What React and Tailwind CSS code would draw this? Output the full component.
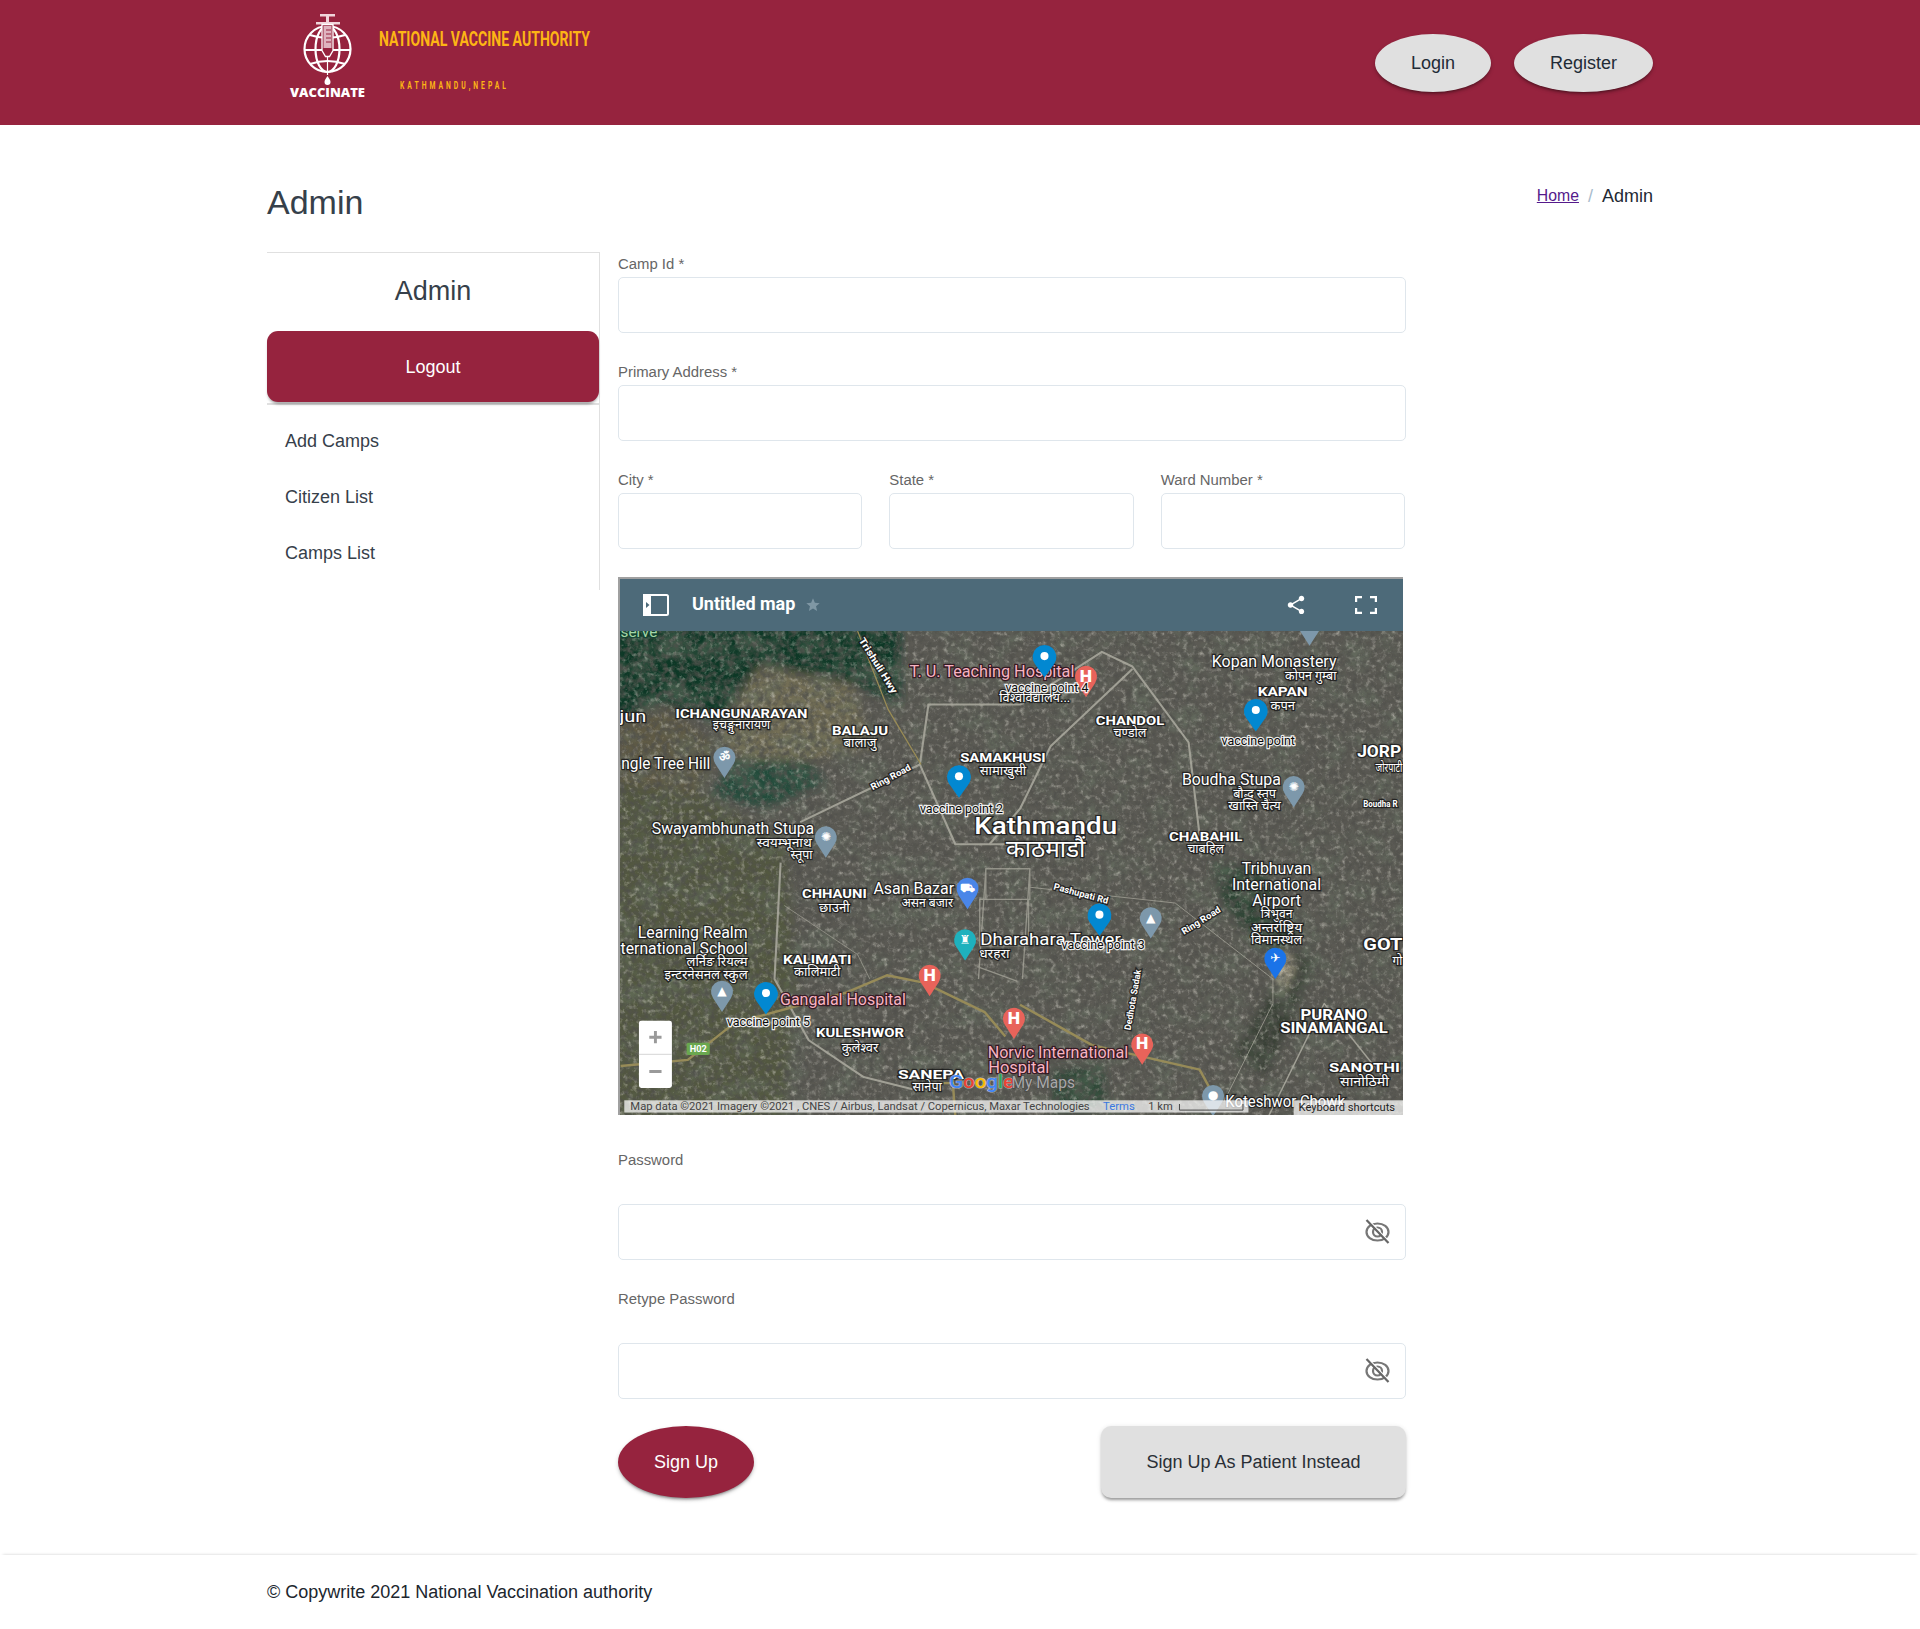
import React from "react";
import { MdShare, MdStar } from "react-icons/md";

const font = "font-['Liberation_Sans',Arial,sans-serif]";

// [text, cx, cy, width, size, kind, rotate]
const mapLabels = [
  ["serve", 521, 517, 30, 12, "green"],
  ["T. U. Teaching Hospital", 810, 549, 135, 13.5, "pink"],
  ["विश्वविद्यालय...", 845, 571, 58, 10, "white"],
  ["Kopan Monastery", 1041, 541, 102, 13.5, "white"],
  ["कोपन गुम्बा", 1071, 553, 42, 10, "white"],
  ["KAPAN", 1048, 565, 41, 11, "bold"],
  ["कपन", 1048, 577, 20, 10, "white"],
  ["ICHANGUNARAYAN", 605, 583, 108, 11, "bold"],
  ["इचङ्गुनारायण", 605, 593, 47, 10, "white"],
  ["jun", 516, 585, 22, 14, "white"],
  ["BALAJU", 702, 597, 46, 11, "bold"],
  ["बालाजु", 702, 607, 27, 10, "white"],
  ["CHANDOL", 923, 589, 56, 11, "bold"],
  ["चण्डोल", 923, 599, 27, 10, "white"],
  ["SAMAKHUSI", 819, 619, 70, 11, "bold"],
  ["सामाखुसी", 819, 630, 38, 10, "white"],
  ["ngle Tree Hill", 543, 624, 73, 13.5, "white"],
  ["JORP", 1127, 614, 36, 13, "bold"],
  ["जोरपाटी", 1135, 628, 22, 10, "white"],
  ["Boudha Stupa", 1006, 637, 81, 13.5, "white"],
  ["बौद्ध स्तूप", 1025, 649, 35, 10, "white"],
  ["खास्ति चैत्य", 1025, 659, 43, 10, "white"],
  ["Boudha R", 1128, 657, 28, 7, "bold"],
  ["Kathmandu", 854, 675, 117, 20, "big"],
  ["काठमाडौं", 854, 694, 65, 19, "white"],
  ["Swayambhunath Stupa", 598, 677, 133, 13.5, "white"],
  ["स्वयम्भूनाथ", 640, 689, 45, 10, "white"],
  ["स्तूपा", 654, 699, 18, 10, "white"],
  ["CHABAHIL", 985, 684, 60, 11, "bold"],
  ["चाबहिल", 985, 694, 30, 10, "white"],
  ["Tribhuvan", 1043, 710, 57, 13.5, "white"],
  ["International", 1043, 723, 73, 13.5, "white"],
  ["Airport", 1043, 736, 40, 13.5, "white"],
  ["त्रिभुवन", 1043, 747, 26, 10, "white"],
  ["अन्तर्राष्ट्रिय", 1043, 758, 42, 10, "white"],
  ["विमानस्थल", 1043, 768, 42, 10, "white"],
  ["CHHAUNI", 681, 730, 53, 11, "bold"],
  ["छाउनी", 681, 742, 25, 10, "white"],
  ["Asan Bazar", 746, 726, 66, 13.5, "white"],
  ["असन बजार", 757, 738, 42, 10, "white"],
  ["Learning Realm", 565, 762, 90, 13.5, "white"],
  ["ternational School", 558, 775, 104, 13.5, "white"],
  ["लर्निङ रियल्म", 585, 786, 50, 10, "white"],
  ["इन्टरनेसनल स्कुल", 576, 797, 68, 10, "white"],
  ["KALIMATI", 667, 784, 56, 11, "bold"],
  ["कालिमाटी", 667, 794, 38, 10, "white"],
  ["Dharahara Tower", 858, 768, 115, 13.5, "white"],
  ["धरहरा", 812, 780, 25, 10, "white"],
  ["Pashupati Rd", 883, 730, 46, 7.5, "bold", 15],
  ["Ring Road", 981, 752, 36, 7.5, "bold", -32],
  ["Ring Road", 727, 635, 36, 7.5, "bold", -28],
  ["Trishuli Hwy", 717, 544, 52, 8, "bold", 58],
  ["Dedhota Sadak", 925, 817, 50, 7.5, "bold", -80],
  ["GOT", 1130, 772, 32, 13, "bold"],
  ["गो", 1142, 785, 8, 10, "white"],
  ["PURANO", 1090, 829, 55, 11.5, "bold"],
  ["SINAMANGAL", 1090, 840, 88, 11.5, "bold"],
  ["Gangalal Hospital", 688, 817, 103, 13.5, "pink"],
  ["KULESHWOR", 702, 844, 72, 11, "bold"],
  ["कुलेश्वर", 702, 856, 30, 10, "white"],
  ["Norvic International", 864, 860, 115, 13.5, "pink"],
  ["Hospital", 832, 872, 50, 13.5, "pink"],
  ["SANEPA", 760, 878, 54, 11, "bold"],
  ["सानेपा", 757, 888, 24, 10, "white"],
  ["SANOTHI", 1115, 872, 58, 11, "bold"],
  ["सानोठिमी", 1115, 884, 40, 10, "white"],
  ["Koteshwor Chowk", 1050, 900, 98, 13.5, "white"],
];

const pinLabels = [
  ["vaccine point 4", 855, 562, 68, 10.5, "pin"],
  ["vaccine point", 1028, 605, 60, 10.5, "pin"],
  ["vaccine point 2", 785, 661, 68, 10.5, "pin"],
  ["vaccine point 3", 901, 772, 68, 10.5, "pin"],
  ["vaccine point 5", 627, 835, 68, 10.5, "pin"],
];

const bluePins = [
  [853, 554],
  [1026, 598],
  [783, 652],
  [898, 765],
  [625, 829],
];

const pinPath = (x, tip, w, h) => {
  const r = w / 2;
  const cy = tip - h + r;
  return `M${x} ${tip}L${x - r * 0.82} ${cy + r * 0.62}A${r} ${r} 0 1 1 ${x + r * 0.82} ${cy + r * 0.62}Z`;
};

// [x, tip, colour, glyph]
const poiPins = [
  [591, 636, "#7d98ab", "ॐ"],
  [674, 701, "#7d98ab", "✺"],
  [1057, 660, "#7d98ab", "✺"],
  [1070, 528, "#7d98ab", "✺"],
  [589, 827, "#7d98ab", "▲"],
  [940, 767, "#7d98ab", "▲"],
  [991, 912, "#7d98ab", "●"],
  [887, 570, "#e8635a", "H"],
  [759, 814, "#e8635a", "H"],
  [828, 849, "#e8635a", "H"],
  [933, 870, "#e8635a", "H"],
  [790, 743, "#4a86e8", "⛟"],
  [788, 785, "#1eb1bd", "♜"],
  [1042, 800, "#1a73e8", "✈"],
];

const labelStyle = {
  white: { fill: "#fff", stroke: "#1c1c1c", weight: 400, halo: 2.2, fade: 0.85 },
  bold: { fill: "#fff", stroke: "#1c1c1c", weight: 700, halo: 2.2, fade: 0.85 },
  big: { fill: "#fff", stroke: "#1c1c1c", weight: 500, halo: 2.2, fade: 0.85 },
  green: { fill: "#a5d6a7", stroke: "#143", weight: 400, halo: 2.2, fade: 0.85 },
  pink: { fill: "#f7b4c2", stroke: "#2f0f1b", weight: 400, halo: 2.2, fade: 0.85 },
  pin: { fill: "#0b0b0b", stroke: "#fff", weight: 400, halo: 2, fade: 0.9 },
};

const MapLabel = ({ text, x, y, w, size, kind, rotate }) => {
  const s = labelStyle[kind];
  return (
    <text
      x={x}
      y={y}
      textAnchor="middle"
      dominantBaseline="central"
      fontFamily="Roboto, 'Noto Sans', 'Noto Sans CJK SC', sans-serif"
      fontSize={size}
      fontWeight={s.weight}
      fill={s.fill}
      stroke={s.stroke}
      strokeWidth={s.halo}
      paintOrder="stroke"
      strokeOpacity={s.fade}
      textLength={w}
      lengthAdjust="spacingAndGlyphs"
      transform={rotate ? `rotate(${rotate} ${x} ${y})` : undefined}
    >
      {text}
    </text>
  );
};

const SatelliteMap = () => (
  <svg viewBox="505.5 516 641 395" className="block w-full h-[484px]" preserveAspectRatio="none">
    <defs>
      <filter id="speckDark" x="0" y="0" width="100%" height="100%">
        <feTurbulence type="fractalNoise" baseFrequency="0.2" numOctaves="4" seed="7" />
        <feColorMatrix values="0 0 0 0 0.08  0 0 0 0 0.08  0 0 0 0 0.07  2.6 0 0 0 -0.95" />
        <feGaussianBlur stdDeviation="0.6" />
      </filter>
      <filter id="speckLight" x="0" y="0" width="100%" height="100%">
        <feTurbulence type="fractalNoise" baseFrequency="0.24" numOctaves="4" seed="23" />
        <feColorMatrix values="0 0 0 0 0.62  0 0 0 0 0.6  0 0 0 0 0.54  2.2 0 0 0 -1.1" />
        <feGaussianBlur stdDeviation="0.6" />
      </filter>
      <filter id="patches" x="0" y="0" width="100%" height="100%">
        <feTurbulence type="fractalNoise" baseFrequency="0.05" numOctaves="4" seed="11" />
        <feColorMatrix values="0 0 0 0 0.14  0 0 0 0 0.18  0 0 0 0 0.13  3 0 0 0 -1.3" />
      </filter>
      <filter id="soft" x="-20%" y="-20%" width="140%" height="140%">
        <feGaussianBlur stdDeviation="4" />
      </filter>
    </defs>

    <rect x="505" y="516" width="642" height="396" fill="#5b5a54" />
    <g filter="url(#soft)">
      <polygon points="500,640 560,640 640,690 650,800 640,920 500,920" fill="#525840" />
      <polygon points="500,510 735,510 735,575 700,560 620,545 590,590 540,575 500,590" fill="#103828" />
      <polygon points="620,545 695,560 712,610 660,622 605,620 585,600" fill="#736e55" />
      <polygon points="505,590 545,580 585,610 570,650 505,640" fill="#5f5a44" />
      <polygon points="600,620 660,622 672,640 625,660 580,650" fill="#234c3b" />
      <polygon points="990,705 1030,710 1060,760 1045,790 1000,740" fill="#2f4436" />
      <polygon points="1060,776 1075,785 1035,880 1008,860" fill="#373f35" />
      <polygon points="860,875 900,870 905,905 860,910" fill="#2f4a39" />
      <polygon points="1040,790 1048,775 1058,790 1046,815" fill="#a9a38c" />
    </g>
    <rect x="505" y="516" width="642" height="396" filter="url(#patches)" opacity="0.5" />
    <rect x="505" y="516" width="642" height="396" filter="url(#speckLight)" opacity="0.65" />
    <rect x="505" y="516" width="642" height="396" filter="url(#speckDark)" opacity="0.75" />

    <g fill="none" stroke="#a8a79c" strokeWidth="1.7" strokeLinejoin="round" opacity="0.9">
      <polyline points="653,672 751,625 758,576 833,576 900,533 925,545 971,607 980,683" />
      <polyline points="925,547 858,610 833,661 808,690" />
      <polyline points="751,625 780,690 808,690 845,690" />
      <polyline points="637,705 632,800 660,850 705,880 745,890" />
      <polyline points="1030,925 1082,820 1130,880" strokeWidth="1.2" />
    </g>
    <g fill="none" stroke="#a8a79c" strokeWidth="1.1" opacity="0.75">
      <path d="M805 710h36v25h-36zM800 735h40v38h-40zM805 710l-6 90M841 710l-6 90 M798 790l33 12" />
      <polyline points="840 725 960 738 1040 800 1040 820 1000 900" strokeWidth="0.8" />
      <polyline points="640 740 700 780 710 800" strokeWidth="0.7" />
    </g>
    <g fill="none" stroke="#978b58" strokeWidth="2" strokeLinejoin="round">
      <polyline points="506,871 561,866 599,836 691,811 724,797 754,803 804,827 821,847" />
      <polyline points="833,821 892,854 980,874 992,896" />
      <polyline points="745,885 778,885 780,912" />
    </g>
    <polyline points="700,516 725,580 752,625" fill="none" stroke="#9a8c55" strokeWidth="1" />

    {mapLabels.map(([text, x, y, w, size, kind, rotate], i) => (
      <MapLabel key={i} text={text} x={x} y={y} w={w} size={size} kind={kind} rotate={rotate} />
    ))}

    {poiPins.map(([x, tip, color, glyph], i) => (
      <g key={i}>
        <path d={pinPath(x, tip, 18, 26)} fill={color} />
        <text
          x={x}
          y={tip - 17}
          textAnchor="middle"
          dominantBaseline="central"
          fontFamily="'DejaVu Sans', sans-serif"
          fontSize={glyph === "H" ? 13 : 10}
          fontWeight="700"
          fill="#fff"
        >
          {glyph}
        </text>
      </g>
    ))}

    {bluePins.map(([x, tip]) => (
      <g key={x}>
        <path d={pinPath(x, tip, 19.5, 27)} fill="#0288d1" />
        <circle cx={x} cy={tip - 17.5} r="3.3" fill="#fff" />
      </g>
    ))}

    {pinLabels.map(([text, x, y, w, size, kind]) => (
      <MapLabel key={text} text={text} x={x} y={y} w={w} size={size} kind={kind} />
    ))}

    <rect x="560" y="852" width="19" height="10" rx="1.5" fill="#6aa84f" />
    <text x="569.5" y="857" textAnchor="middle" dominantBaseline="central" fontFamily="Roboto, sans-serif" fontSize="7.5" fontWeight="700" fill="#fff">H02</text>

    <rect x="521" y="834" width="27" height="55" rx="2" fill="#fff" />
    <line x1="521" y1="861.5" x2="548" y2="861.5" stroke="#ddd" />
    <path d="M529.5 847.5h10M534.5 842.5v10M529.5 875.5h10" stroke="#9a9a9a" strokeWidth="2.4" />

    <text x="775" y="889" fontFamily="Roboto, sans-serif" fontSize="15" fontWeight="500" stroke="#fff" strokeOpacity="0.5" strokeWidth="1" paintOrder="stroke" textLength="53" lengthAdjust="spacingAndGlyphs">
      <tspan fill="#4285f4">G</tspan>
      <tspan fill="#ea4335">o</tspan>
      <tspan fill="#fbbc05">o</tspan>
      <tspan fill="#4285f4">g</tspan>
      <tspan fill="#34a853">l</tspan>
      <tspan fill="#ea4335">e</tspan>
    </text>
    <text x="826" y="889" fontFamily="Roboto, sans-serif" fontSize="14" fill="#a8a8a8" stroke="#444" strokeWidth="1" paintOrder="stroke" textLength="52" lengthAdjust="spacingAndGlyphs">My Maps</text>

    <rect x="509" y="899" width="511" height="10" fill="#fff" fillOpacity="0.72" />
    <text x="514" y="904" dominantBaseline="central" fontFamily="Roboto, sans-serif" fontSize="8.5" fill="#444" textLength="376" lengthAdjust="spacingAndGlyphs">Map data ©2021 Imagery ©2021 , CNES / Airbus, Landsat / Copernicus, Maxar Technologies</text>
    <text x="901" y="904" dominantBaseline="central" fontFamily="Roboto, sans-serif" fontSize="8.5" fill="#3a78e0" textLength="26" lengthAdjust="spacingAndGlyphs">Terms</text>
    <text x="938" y="904" dominantBaseline="central" fontFamily="Roboto, sans-serif" fontSize="8.5" fill="#444" textLength="20" lengthAdjust="spacingAndGlyphs">1 km</text>
    <path d="M963.5 902v5h52v-5" fill="none" stroke="#444" strokeWidth="0.8" />
    <rect x="1057" y="899" width="90" height="12" fill="#fff" fillOpacity="0.72" />
    <text x="1061" y="905" dominantBaseline="central" fontFamily="Roboto, sans-serif" fontSize="8.5" fill="#222" textLength="79" lengthAdjust="spacingAndGlyphs">Keyboard shortcuts</text>
  </svg>
);

const Logo = () => (
  <svg width="360" height="125" viewBox="0 0 360 125" className="block shrink-0">
    <g fill="none" stroke="#fff" strokeWidth="2.2">
      <circle cx="67.5" cy="49" r="23" />
      <ellipse cx="67.5" cy="49" rx="12" ry="23" />
      <path d="M45 50h45M50 35q17.5 6 35 0M50 64q17.5 -6 35 0" />
    </g>
    <path d="M60 14h15v2.5h-15zM66 16h3v6h-3zM56 22h24v2.5h-24z" fill="#f0d5da" />
    <path d="M62 24.5h11v26l-3.500 6h-4l-3.500-6z" fill="#96233e" stroke="#fff" strokeWidth="1.3" />
    <path d="M63.5 26h8v22h-8z" fill="#dfb4bf" />
    <path d="M66 30h5M66 34h5M66 38h5M66 42h5" stroke="#96233e" strokeWidth="1" />
    <path d="M66.9 56h1.2v19h-1.2z" fill="#fff" />
    <path d="M67.5 76c2 3 3 4 3 6a3 3 0 0 1-6 0c0-2 1-3 3-6z" fill="#fff" />
    <text x="67.5" y="92.5" textAnchor="middle" dominantBaseline="central" fontFamily="'Open Sans', sans-serif" fontWeight="800" fontSize="12" fill="#fff" textLength="75" lengthAdjust="spacingAndGlyphs">VACCINATE</text>
    <text x="119" y="39" dominantBaseline="central" fontFamily="Roboto, sans-serif" fontWeight="700" fontSize="21" fill="#fdb515" textLength="211" lengthAdjust="spacingAndGlyphs">NATIONAL VACCINE AUTHORITY</text>
    <text transform="translate(140 85) scale(0.62 1)" dominantBaseline="central" fontFamily="Roboto, sans-serif" fontWeight="700" fontSize="11" fill="#fdb515" textLength="171" lengthAdjust="spacing">KATHMANDU,NEPAL</text>
  </svg>
);

const EyeOff = () => (
  <svg width="26" height="26" viewBox="0 0 26 26" fill="none">
    <ellipse cx="12.5" cy="13" rx="11" ry="8.5" stroke="#777" strokeWidth="2.2" />
    <circle cx="12.5" cy="13" r="4.5" stroke="#777" strokeWidth="2.2" />
    <path d="M3 0.5L24.500 23" stroke="#fff" strokeWidth="1.4" />
    <path d="M1.500 1L23.500 24" stroke="#666" strokeWidth="2.2" />
  </svg>
);

const Field = ({ label, className }) => (
  <div className={className}>
    <label className="block text-[14.9px] leading-[17px] text-[#666] mb-[4px]">{label}</label>
    <div className="h-[56px] rounded-[5px] border border-[#dfe6ec] bg-white" />
  </div>
);

const PasswordField = ({ label }) => (
  <div>
    <label className="block text-[14.9px] leading-[17px] text-[#666] mb-[35px]">{label}</label>
    <div className="h-[56px] rounded-[5px] border border-[#dfe6ec] bg-white flex items-center justify-end pr-[14px]">
      <EyeOff />
    </div>
  </div>
);

export default function App() {
  return (
    <div className={`${font} bg-white h-[1629px] overflow-hidden text-[#333b45]`}>
      <header className="h-[125px] bg-[#96233e] flex items-start justify-between pl-[260px] pr-[267px]">
        <Logo />
        <div className="flex gap-[23px] pt-[34px]">
          <button className="w-[116px] h-[58px] rounded-[50%] bg-[#e0e0e0] text-[18px] text-[#222b36] shadow-[0_3px_3px_-2px_rgba(0,0,0,0.4),0_2px_4px_rgba(0,0,0,0.2)]">
            Login
          </button>
          <button className="w-[139px] h-[58px] rounded-[50%] bg-[#e0e0e0] text-[18px] text-[#222b36] shadow-[0_3px_3px_-2px_rgba(0,0,0,0.4),0_2px_4px_rgba(0,0,0,0.2)]">
            Register
          </button>
        </div>
      </header>

      <main className="pl-[267px] pr-[267px]">
        <div className="flex justify-between items-start pt-[56px] h-[127px]">
          <h1 className="text-[34px] leading-[43px] text-[#36404a]">Admin</h1>
          <div className="flex items-center text-[15.8px] leading-[30px]">
            <a className="text-[#551a8b] underline" href="#home">Home</a>
            <span className="mx-[9px] text-[18px] text-[#a9bccd]">/</span>
            <span className="text-[18px] text-[#1e2933]">Admin</span>
          </div>
        </div>

        <div className="flex">
          <aside className="w-[333px] h-[338px] border-t border-r border-[#e0e0e0] shrink-0">
            <h2 className="text-[27px] leading-[76px] mb-[2px] text-center text-[#36404a]">Admin</h2>
            <div className="border-b-2 border-[#e0e0e0] pb-[1px]">
              <button className="w-full h-[71px] pt-[2px] rounded-[11px] bg-[#96233e] text-white text-[18px] shadow-[0_3px_3px_-1px_rgba(0,0,0,0.35)]">
                Logout
              </button>
            </div>
            <ul className="pt-[8px] pl-[18px] text-[18px] text-[#36404a]">
              <li className="h-[56px] leading-[56px]">Add Camps</li>
              <li className="h-[56px] leading-[56px]">Citizen List</li>
              <li className="h-[56px] leading-[56px]">Camps List</li>
            </ul>
          </aside>

          <form className="ml-[18px] w-[788px] pt-[4px]">
            <Field label="Camp Id *" className="mb-[31px]" />
            <Field label="Primary Address *" className="mb-[31px]" />
            <div className="grid grid-cols-3 gap-[27px] w-[787px]">
              <Field label="City *" />
              <Field label="State *" />
              <Field label="Ward Number *" />
            </div>

            <div className="mt-[28px] w-[785px] h-[538px] border-t-[2px] border-l-[2px] border-[#a0a0a0] overflow-hidden flex flex-col">
              <div className="h-[52px] shrink-0 bg-[#4d6a79] flex items-center text-white pl-[23px] pr-[26px]">
                <svg width="26" height="22" viewBox="0 0 26 22" fill="none">
                  <rect x="1" y="1" width="24" height="20" rx="1.5" stroke="#fff" strokeWidth="2" />
                  <rect x="0" y="0" width="8" height="22" fill="#fff" />
                  <path d="M3 8l3.5 3L3 14z" fill="#4d6a79" />
                </svg>
                <span className="ml-[23px] text-[18px] leading-[22px] -mt-[2px] font-bold font-['Roboto']">Untitled map</span>
                <MdStar size={16} color="#7f97a4" className="ml-[10px]" />
                <div className="ml-auto flex items-center gap-[48px]">
                  <MdShare size={22} color="#fff" />
                  <svg width="22" height="18" viewBox="0 0 22 18" fill="none" stroke="#fff" strokeWidth="2.4">
                    <path d="M1 6V1h6M15 1h6v5M21 12v5h-6M7 17H1v-5" />
                  </svg>
                </div>
              </div>
              <SatelliteMap />
            </div>

            <div className="mt-[37px]">
              <PasswordField label="Password" />
            </div>
            <div className="mt-[31px]">
              <PasswordField label="Retype Password" />
            </div>

            <div className="mt-[27px] flex justify-between">
              <button type="button" className="w-[136px] h-[72px] rounded-[50%] bg-[#96233e] text-white text-[18px] shadow-[0_3px_3px_-2px_rgba(0,0,0,0.4),0_2px_4px_rgba(0,0,0,0.2)]">
                Sign Up
              </button>
              <button type="button" className="w-[305px] h-[72px] rounded-[10px] bg-[#e0e0e0] text-[18px] text-[#2a2f36] shadow-[0_3px_3px_-1px_rgba(0,0,0,0.35),0_1px_5px_rgba(0,0,0,0.12)]">
                Sign Up As Patient Instead
              </button>
            </div>
          </form>
        </div>
      </main>

      <footer className="mt-[57px] h-[72px] pt-[2px] flex items-center pl-[267px] text-[18px] text-[#20262e] shadow-[0_-3px_3px_-3px_rgba(0,0,0,0.2)]">
        © Copywrite 2021 National Vaccination authority
      </footer>
    </div>
  );
}
